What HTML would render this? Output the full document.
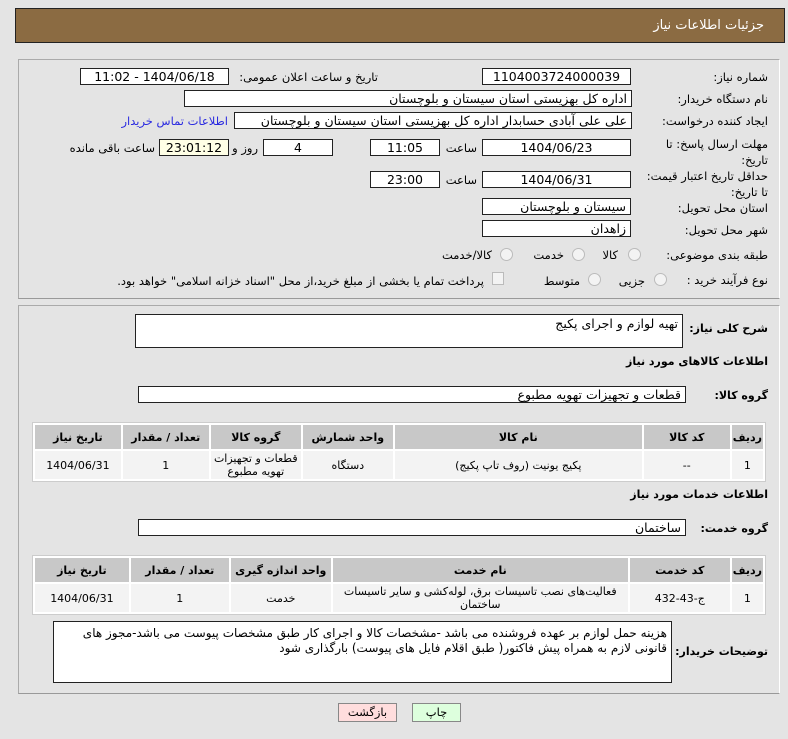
<!DOCTYPE html>
<html><head><meta charset="utf-8"><style>
body{margin:0;width:788px;height:739px;background:#e4e4e4;font-family:"DejaVu Sans","Liberation Sans",sans-serif;font-size:11.5px;color:#000;position:relative;overflow:hidden}
.a{position:absolute}
.hd{left:15px;top:8px;width:768px;height:33px;background:#8b6b42;border:1px solid #222}
.hd span{position:absolute;right:20px;top:9px;color:#fff;font-size:13px}
.pn{position:absolute;left:18px;width:760px;border:1px solid #aaa;border-right-color:#fff;border-bottom-color:#999;background:#e4e4e4}
.in{position:absolute;background:#fff;border:1px solid #222;height:15px;line-height:15px;direction:rtl;text-align:center;font-size:12.5px;box-sizing:content-box}
.r{text-align:right;padding-right:4px}
.l{position:absolute;direction:rtl;text-align:right;white-space:nowrap}
.b{font-weight:bold;font-size:11px}
table{position:absolute;border-collapse:separate;border-spacing:2px;background:#fff;border:1px solid #ccc;direction:rtl;font-size:11px}
th{background:#c8c8c8;font-weight:bold;height:22px}
td{background:#f3f3f3;text-align:center;height:26px;line-height:13px}
.rad{position:absolute;width:11px;height:11px;border-radius:50%;border:1px solid #bbb;background:#f3f3f3}
</style></head><body>
<div class="a hd"><span>جزئیات اطلاعات نیاز</span></div>
<div class="pn" style="top:59px;height:238px"></div>
<div class="pn" style="top:305px;height:387px"></div>

<div class="l" style="right:20px;top:70px">شماره نیاز:</div>
<div class="in" style="left:482px;top:68px;width:147px">1104003724000039</div>
<div class="l" style="right:410px;top:70px">تاریخ و ساعت اعلان عمومی:</div>
<div class="in" style="left:80px;top:68px;width:147px">1404/06/18 - 11:02</div>

<div class="l" style="right:20px;top:92px">نام دستگاه خریدار:</div>
<div class="in r" style="left:184px;top:90px;width:442px">اداره کل بهزیستی استان سیستان و بلوچستان</div>

<div class="l" style="right:20px;top:114px">ایجاد کننده درخواست:</div>
<div class="in r" style="left:234px;top:112px;width:392px">علی علی آبادی حسابدار اداره کل بهزیستی استان سیستان و بلوچستان</div>
<div class="l" style="right:560px;top:114px;color:#2a2ae0">اطلاعات تماس خریدار</div>

<div class="l" style="right:20px;top:136px;line-height:16px">مهلت ارسال پاسخ: تا<br>تاریخ:</div>
<div class="in" style="left:482px;top:139px;width:147px">1404/06/23</div>
<div class="l" style="right:311px;top:141px">ساعت</div>
<div class="in" style="left:370px;top:139px;width:68px">11:05</div>
<div class="in" style="left:263px;top:139px;width:68px">4</div>
<div class="l" style="right:530px;top:141px">روز و</div>
<div class="in" style="left:159px;top:139px;width:68px;background:#ffffe6">23:01:12</div>
<div class="l" style="right:633px;top:141px">ساعت باقی مانده</div>

<div class="l" style="right:20px;top:168px;line-height:16px">حداقل تاریخ اعتبار قیمت:<br>تا تاریخ:</div>
<div class="in" style="left:482px;top:171px;width:147px">1404/06/31</div>
<div class="l" style="right:311px;top:173px">ساعت</div>
<div class="in" style="left:370px;top:171px;width:68px">23:00</div>

<div class="l" style="right:20px;top:201px">استان محل تحویل:</div>
<div class="in r" style="left:482px;top:198px;width:143px">سیستان و بلوچستان</div>
<div class="l" style="right:20px;top:223px">شهر محل تحویل:</div>
<div class="in r" style="left:482px;top:220px;width:143px">زاهدان</div>

<div class="l" style="right:20px;top:248px">طبقه بندی موضوعی:</div>
<div class="rad" style="left:628px;top:248px"></div><div class="l" style="right:170px;top:248px">کالا</div>
<div class="rad" style="left:572px;top:248px"></div><div class="l" style="right:224px;top:248px">خدمت</div>
<div class="rad" style="left:500px;top:248px"></div><div class="l" style="right:296px;top:248px">کالا/خدمت</div>

<div class="l" style="right:20px;top:273px">نوع فرآیند خرید :</div>
<div class="rad" style="left:654px;top:273px"></div><div class="l" style="right:143px;top:274px">جزیی</div>
<div class="rad" style="left:588px;top:273px"></div><div class="l" style="right:208px;top:274px">متوسط</div>
<div class="a" style="left:492px;top:272px;width:10px;height:11px;border:1px solid #bbb;background:#f3f3f3"></div>
<div class="l" style="right:304px;top:274px">پرداخت تمام یا بخشی از مبلغ خرید،از محل "اسناد خزانه اسلامی" خواهد بود.</div>

<div class="l b" style="right:20px;top:322px">شرح کلی نیاز:</div>
<div class="in r" style="left:135px;top:314px;width:542px;height:32px;line-height:18px">تهیه لوازم و اجرای پکیج</div>
<div class="l b" style="right:20px;top:355px">اطلاعات کالاهای مورد نیاز</div>
<div class="l b" style="right:20px;top:389px">گروه کالا:</div>
<div class="in r" style="left:138px;top:386px;width:542px">قطعات و تجهیزات تهویه مطبوع</div>

<table style="left:32px;top:422px;width:734px">
<tr><th style="width:22px">ردیف</th><th style="width:84px">کد کالا</th><th style="width:245px">نام کالا</th><th style="width:88px">واحد شمارش</th><th style="width:88px">گروه کالا</th><th style="width:84px">تعداد / مقدار</th><th>تاریخ نیاز</th></tr>
<tr><td>1</td><td>--</td><td>پکیج یونیت (روف تاپ پکیج)</td><td>دستگاه</td><td>قطعات و تجهیزات تهویه مطبوع</td><td>1</td><td>1404/06/31</td></tr>
</table>

<div class="l b" style="right:20px;top:488px">اطلاعات خدمات مورد نیاز</div>
<div class="l b" style="right:20px;top:522px">گروه خدمت:</div>
<div class="in r" style="left:138px;top:519px;width:542px">ساختمان</div>

<table style="left:32px;top:555px;width:734px">
<tr><th style="width:22px">ردیف</th><th style="width:98px">کد خدمت</th><th style="width:293px">نام خدمت</th><th style="width:98px">واحد اندازه گیری</th><th style="width:96px">تعداد / مقدار</th><th>تاریخ نیاز</th></tr>
<tr><td>1</td><td>ج-43-432</td><td>فعالیت‌های نصب تاسیسات برق، لوله‌کشی و سایر تاسیسات ساختمان</td><td>خدمت</td><td>1</td><td>1404/06/31</td></tr>
</table>

<div class="l b" style="right:20px;top:645px">توضیحات خریدار:</div>
<div class="in r" style="left:53px;top:621px;width:613px;text-align:right;line-height:15px;padding-top:4px;height:56px;font-size:12px">هزینه حمل لوازم بر عهده فروشنده می باشد -مشخصات کالا و اجرای کار طبق مشخصات پیوست می باشد-مجوز های قانونی لازم به همراه پیش فاکتور( طبق اقلام فایل های پیوست) بارگذاری شود</div>

<div class="a" style="left:338px;top:703px;width:57px;height:17px;background:#fdd;border:1px solid #888;text-align:center;line-height:17px">بازگشت</div>
<div class="a" style="left:412px;top:703px;width:47px;height:17px;background:#dfd;border:1px solid #888;text-align:center;line-height:17px">چاپ</div>
</body></html>
